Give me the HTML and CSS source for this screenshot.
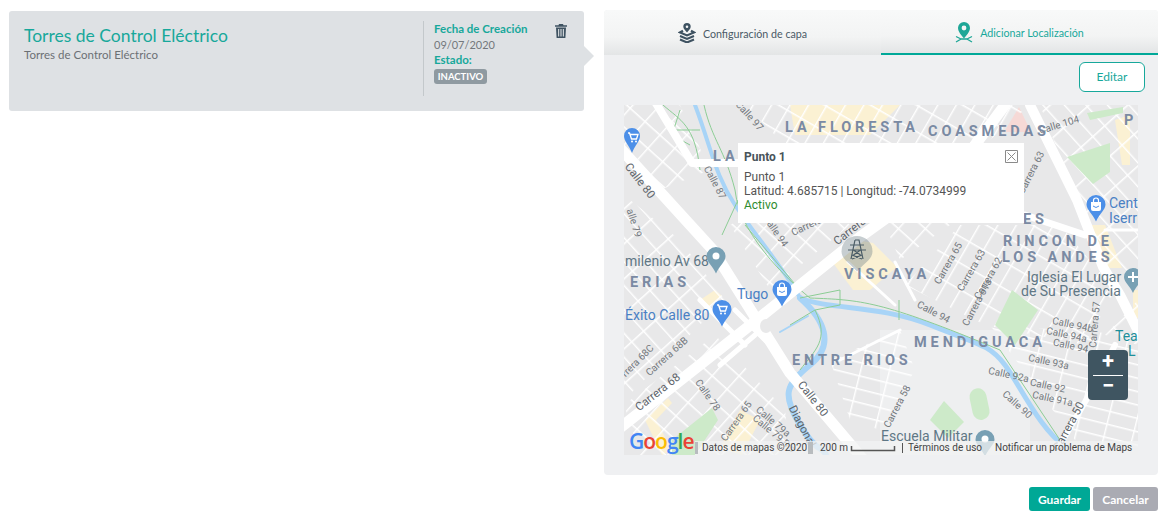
FILE: index.html
```html
<!DOCTYPE html>
<html lang="es">
<head>
    <meta charset="UTF-8">
    <meta name="viewport" content="width=device-width, initial-scale=1.0">
    <title>Torres de Control Eléctrico</title>
    <link rel="stylesheet" href="styles.css">
</head>
<body>

<div class="page">
    <div class="layer-card">
        <div class="layer-info">
            <div class="layer-title">Torres de Control Eléctrico</div>
            <div class="layer-desc">Torres de Control Eléctrico</div>
        </div>
        <div class="layer-meta">
            <div class="meta-label">Fecha de Creación</div>
            <div class="meta-value">09/07/2020</div>
            <div class="meta-label">Estado:</div>
            <span class="badge">INACTIVO</span>
        </div>
        <svg class="trash" viewBox="0 0 12 14" width="12" height="14">
            <path d="M4 0h4l.5 1.2H12v1.6H0V1.2h3.500z M1 3.600h10l-.6 10.400H1.600z M3.100 5v7.500h1.100V5z M5.450 5v7.500h1.100V5z M7.800 5v7.500h1.100V5z" fill="#3e5261" fill-rule="evenodd"/>
        </svg>
    </div>

    <div class="right-col">
        <div class="panel">
            <div class="tabs">
                <div class="tab">
                    <svg viewBox="0 0 18 20" width="18" height="20">
                        <path d="M9 0a3.700 3.700 0 0 1 3.700 3.700c0 2-2 3.600-3.700 5.800-1.700-2.200-3.700-3.800-3.700-5.800A3.700 3.700 0 0 1 9 0z M9 2.400a1.300 1.300 0 1 0 0 2.600 1.300 1.300 0 0 0 0-2.600z" fill="#3e5261" fill-rule="evenodd"/>
                        <path d="M5 7.800 2 9.500 9 12.400l7-2.900-3-1.700 M2 13 9 15.900 16 13 M2 16.500 9 19.400l7-2.900" fill="none" stroke="#3e5261" stroke-width="2.200"/>
                    </svg>
                    <span>Configuración de capa</span>
                </div>
                <div class="tab active">
                    <svg viewBox="0 0 18 21" width="18" height="21">
                        <path d="M9 0a6 6 0 0 1 6 6c0 3.500-3.500 7.500-6 10.500C6.500 13.500 3 9.500 3 6a6 6 0 0 1 6-6z M9 3.600a2.400 2.400 0 1 0 0 4.800 2.400 2.400 0 0 0 0-4.800z" fill="#1fa797" fill-rule="evenodd"/>
                        <path d="M1 14.500l5 2.500-5 3 M17 14.500l-5 2.500 5 3 M6 17h6" fill="none" stroke="#1fa797" stroke-width="1.300"/>
                    </svg>
                    <span>Adicionar Localización</span>
                </div>
            </div>

            <div class="panel-actions">
                <button class="btn-outline">Editar</button>
            </div>

            <div class="map">
                <svg class="map-canvas" viewBox="624 105 514 350" width="514" height="350">
                    <defs>
                        <pattern id="gridA" width="16" height="23" patternUnits="userSpaceOnUse" patternTransform="rotate(30)">
                            <path d="M0 0H16M0 0V23" stroke="#fff" stroke-width="2.800" fill="none"/>
                        </pattern>
                        <pattern id="gridB" width="28" height="13" patternUnits="userSpaceOnUse" patternTransform="rotate(14)">
                            <path d="M0 0H28M0 0V13" stroke="#fff" stroke-width="2.800" fill="none"/>
                        </pattern>
                        <pattern id="gridC" width="16" height="26" patternUnits="userSpaceOnUse" patternTransform="rotate(-42)">
                            <path d="M0 0H16M0 0V26" stroke="#fff" stroke-width="2.800" fill="none"/>
                        </pattern>
                        <pattern id="gridD" width="20" height="18" patternUnits="userSpaceOnUse" patternTransform="rotate(42)">
                            <path d="M0 0H20M0 0V18" stroke="#fff" stroke-width="2.800" fill="none"/>
                        </pattern>
                    </defs>

                    <rect x="624" y="105" width="514" height="350" fill="#e8e8e9"/>
                    <rect x="880" y="330" width="150" height="125" fill="#eeeff0"/>

                    <!-- parques y zonas -->
                    <polygon points="833,263 857,240 873,243 897,267 870,290 853,290" fill="#fbf1d3"/>
                    <polygon points="1004,132 1019,107 1031,132" fill="#f6d9d6"/>
                    <polygon points="1115,120 1130,115 1130,165 1122,165" fill="#fbf1d3"/>
                    <polygon points="1088,225 1105,225 1122,268 1105,268" fill="#fbf1d3"/>
                    <polygon points="645,420 668,398 672,403 656,420 672,450 662,455" fill="#fbf1d3"/>
                    <polygon points="720,448 740,410 760,420 742,455" fill="#fbf1d3"/>
                    <polygon points="790,105 900,105 870,135 795,135" fill="#fbf1d3"/>
                    <polygon points="700,300 715,290 722,296 705,310" fill="#fbf1d3"/>
                    <polygon points="1133,290 1138,290 1138,318 1133,318" fill="#fbf1d3"/>

                    <!-- manzanas -->
                    <polygon points="960,225 1060,225 1115,290 1085,345 985,325 905,285" fill="url(#gridA)"/>
                    <polygon points="990,325 1138,335 1138,450 1075,440" fill="url(#gridB)"/>
                    <polygon points="624,195 680,240 725,300 624,400" fill="url(#gridC)"/>
                    <polygon points="624,405 715,335 785,410 790,455 640,455" fill="url(#gridD)"/>
                    <polygon points="745,105 1030,105 990,140 925,190 790,150" fill="url(#gridA)"/>
                    <polygon points="1040,105 1138,105 1138,275 1105,275 1065,170" fill="url(#gridC)"/>
                    <polygon points="830,360 900,330 915,370 880,430 850,420" fill="url(#gridB)"/>
                    <polygon points="624,105 680,105 710,170 660,190 624,150" fill="url(#gridD)"/>
                    <polygon points="870,190 960,200 950,225 900,260" fill="url(#gridD)"/>
                    <polygon points="730,225 800,185 850,225 770,290" fill="url(#gridD)"/>
                    <polygon points="1105,335 1138,300 1138,345" fill="url(#gridC)"/>

                    <!-- parques encima de las calles -->
                    <polygon points="1067,157 1110,143 1110,172 1093,184" fill="#cdeac9"/>
                    <polygon points="1087,113 1123,107 1123,113 1090,120" fill="#cdeac9"/>
                    <polygon points="1012,290 1038,310 1015,345 995,325" fill="#cdeac9"/>
                    <polygon points="930,420 944,401 964,422 948,438" fill="#cdeac9"/>
                    <rect x="971" y="388" width="17" height="32" rx="8.500" transform="rotate(-12 980 404)" fill="#cdeac9"/>
                    <polygon points="672,440 712,408 718,420 695,455 672,455" fill="#cdeac9"/>

                    <!-- rio -->
                    <g fill="none" stroke="#a8d4f7" stroke-linecap="round">
                        <path d="M695 105C712 150 715 175 735 205S785 270 800 298" stroke-width="4"/>
                        <path d="M800 298C830 310 880 305 930 325S990 345 1005 365 1040 430 1066 447" stroke-width="5"/>
                        <path d="M800 298C825 320 835 345 810 365S782 395 800 425 822 445 826 455" stroke-width="6"/>
                        <path d="M780 332 808 316" stroke-width="2"/>
                    </g>

                    <!-- limites verdes -->
                    <g fill="none" stroke="#8ccd95" stroke-width="1">
                        <path d="M663 105C680 120 695 125 700 170 M704 105C712 140 725 150 735 190 740 240 800 290 810 298 860 300 880 300 1000 350L1060 440"/>
                        <path d="M670 130H700 M680 110 672 135 690 145 M738 200 722 235 M745 225 800 290"/>
                        <path d="M800 298 840 290V305L815 310 790 325 M815 310C830 340 815 350 800 370"/>
                        <path d="M899 300V320"/>
                    </g>

                    <!-- vias principales -->
                    <g fill="none" stroke="#fff" stroke-linecap="round" stroke-linejoin="round">
                        <path d="M620 148 713 250 790 373 862 458" stroke-width="11"/>
                        <path d="M620 428 753 323 860 237 960 165 1005 105" stroke-width="11"/>
                        <path d="M1030 105 1077 200 1103 267 1120 295 1140 335" stroke-width="10"/>
                        <path d="M657 105 692 163H745" stroke-width="8"/>
                        <path d="M1060 445 1092 390 1115 345" stroke-width="6"/>
                        <path d="M1025 215 1085 235" stroke-width="7"/>
                        <path d="M735 310 770 345M755 335 720 365M700 300 745 345" stroke-width="5"/>
                        <path d="M848 262 895 305 M895 262 915 300 M840 360 900 330 M1138 230H1105" stroke-width="3"/>
                    </g>
                    <ellipse cx="766" cy="326" rx="6" ry="7" fill="#e8e8e9"/>

                    <!-- calles -->
                    <g class="street">
                        <text transform="translate(747 118) rotate(48)">Calle 97</text>
                        <text transform="translate(1060 128) rotate(-17)">Calle 104</text>
                        <text transform="translate(712 184) rotate(62)">Calle 87</text>
                        <text transform="translate(631 224) rotate(72)">alle 79</text>
                        <text transform="translate(773 233) rotate(55)">Calle 94</text>
                        <text transform="translate(808 229) rotate(-25)">Carrera</text>
                        <text transform="translate(1034 174) rotate(-63)">Carrera 63</text>
                        <text transform="translate(951 265) rotate(-60)">Carrera 65</text>
                        <text transform="translate(974 272) rotate(-60)">Carrera 63</text>
                        <text transform="translate(991 280) rotate(-60)">Carrera 62</text>
                        <text transform="translate(980 304) rotate(-62)">Carrera 61a</text>
                        <text transform="translate(932 315) rotate(28)">Calle 94</text>
                        <text transform="translate(1072 328) rotate(12)">Calle 94b</text>
                        <text transform="translate(1066 338) rotate(12)">Calle 94a</text>
                        <text transform="translate(1070 349) rotate(12)">Calle 94</text>
                        <text transform="translate(1048 365) rotate(12)">Calle 93a</text>
                        <text transform="translate(1008 378) rotate(12)">Calle 92a</text>
                        <text transform="translate(1047 389) rotate(12)">Calle 92</text>
                        <text transform="translate(1052 402) rotate(12)">Calle 91a</text>
                        <text transform="translate(1015 407) rotate(42)">Calle 90</text>
                        <text transform="translate(1098 325) rotate(-85)">Carrera 57</text>
                        <text transform="translate(900 408) rotate(-62)">Carrera 58</text>
                        <text transform="translate(669 359) rotate(-42)">Carrera 68B</text>
                        <text transform="translate(640 363) rotate(-45)">rrera 68C</text>
                        <text transform="translate(705 397) rotate(55)">Calle 78</text>
                        <text transform="translate(739 423) rotate(-55)">Carrera 65</text>
                        <text transform="translate(771 424) rotate(40)">Calle 79a</text>
                        <text transform="translate(772 436) rotate(40)">Calle 79 Bis</text>
                    </g>
                    <g class="street-main">
                        <text transform="translate(637 183) rotate(52)">Calle 80</text>
                        <text transform="translate(660 395) rotate(-38)">Carrera 68</text>
                        <text transform="translate(810 401) rotate(52)">Calle 80</text>
                        <text transform="translate(799 428) rotate(62)">Diagonal</text>
                        <text transform="translate(852 234) rotate(-38)">Carrera</text>
                        <text transform="translate(1072 428) rotate(-62)">Carrera 50</text>
                    </g>

                    <!-- barrios -->
                    <g class="area">
                        <text x="785" y="132">LA FLORESTA</text>
                        <text x="928" y="136">COASMEDAS</text>
                        <text x="713" y="161">LA</text>
                        <text x="1023" y="224">ES</text>
                        <text x="1003" y="246">RINCON DE</text>
                        <text x="1002" y="262">LOS ANDES</text>
                        <text x="844" y="279">VISCAYA</text>
                        <text x="630" y="287">ERIAS</text>
                        <text x="792" y="365">ENTRE RIOS</text>
                        <text x="914" y="347">MENDIGUACA</text>
                        <text x="1124" y="125">P</text>
                    </g>

                    <!-- lugares -->
                    <g class="poi-blue">
                        <text x="1109" y="208">Cent</text>
                        <text x="1109" y="223">Iserr</text>
                        <text x="737" y="299">Tugo</text>
                        <text x="625" y="320">Éxito Calle 80</text>
                    </g>
                    <g class="poi-gray">
                        <text x="625" y="266">milenio Av 68</text>
                        <text x="1027" y="282">Iglesia El Lugar</text>
                        <text x="1021" y="296">de Su Presencia</text>
                        <text x="881" y="441">Escuela Militar</text>
                    </g>
                    <g class="poi-teal">
                        <text x="1115" y="341">Tea</text>
                        <text x="1128" y="356">L</text>
                    </g>

                    <!-- pines -->
                    <g fill="#4c8fe8">
                        <path d="M632 128a8 8 0 0 1 8 8c0 5-5 9-8 17-3-8-8-12-8-17a8 8 0 0 1 8-8z"/>
                        <path d="M1096 195a9.500 9.500 0 0 1 9.500 9.500c0 5-6 9-9.500 17-3.500-8-9.500-12-9.500-17a9.500 9.500 0 0 1 9.500-9.500z"/>
                        <path d="M782 280a9.500 9.500 0 0 1 9.500 9.500c0 5-6 9-9.500 17-3.500-8-9.500-12-9.500-17a9.500 9.500 0 0 1 9.500-9.500z"/>
                        <path d="M722 300a9.500 9.500 0 0 1 9.500 9.500c0 5-6 9-9.500 17-3.500-8-9.500-12-9.500-17a9.500 9.500 0 0 1 9.500-9.500z"/>
                    </g>
                    <g fill="none" stroke="#fff" stroke-width="1.300">
                        <path d="M628 133h1.500l2 6h5l1.500-4.500h-8"/>
                        <path d="M717 305h1.500l2 6h5l1.500-4.500h-8"/>
                    </g>
                    <g fill="#fff">
                        <circle cx="632" cy="141.500" r="1"/>
                        <circle cx="636" cy="141.500" r="1"/>
                        <circle cx="721" cy="313.500" r="1"/>
                        <circle cx="725" cy="313.500" r="1"/>
                        <path d="M1091 202h10v7a2 2 0 0 1-2 2h-6a2 2 0 0 1-2-2z"/>
                        <path d="M777 287h10v7a2 2 0 0 1-2 2h-6a2 2 0 0 1-2-2z"/>
                    </g>
                    <g fill="none" stroke="#fff" stroke-width="1.200">
                        <path d="M1093.500 202v-1.500a2.500 2.500 0 0 1 5 0v1.500"/>
                        <path d="M779.500 287v-1.500a2.500 2.500 0 0 1 5 0v1.500"/>
                    </g>
                    <path d="M1093 206q3 3 6 0M779 291q3 3 6 0" fill="none" stroke="#4c8fe8" stroke-width="1"/>
                    <g fill="#78a0b4">
                        <path d="M716 247a9.500 9.500 0 0 1 9.500 9.500c0 5-6 9-9.500 17-3.500-8-9.500-12-9.500-17a9.500 9.500 0 0 1 9.500-9.500z"/>
                        <path d="M985 430a9.500 9.500 0 0 1 9.500 9.500c0 5-6 9-9.500 17-3.500-8-9.500-12-9.500-17a9.500 9.500 0 0 1 9.500-9.500z"/>
                        <path d="M1133 268a9 9 0 0 1 9 9c0 5-6 9-9 16-3-7-9-11-9-16a9 9 0 0 1 9-9z"/>
                    </g>
                    <circle cx="716" cy="256" r="3.500" fill="#fff"/>
                    <circle cx="985" cy="439" r="3.500" fill="#fff"/>
                    <path d="M1133 272v10M1128 277h10" stroke="#fff" stroke-width="2"/>

                    <!-- marcador de torre -->
                    <path d="M857 236a15.500 15.500 0 0 1 15.500 15.500c0 8-9 12-15.500 20-6.500-8-15.500-12-15.500-20A15.500 15.500 0 0 1 857 236z" fill="#6d7f87" fill-opacity=".38"/>
                    <path d="M855 240h4l4 19M855 240l-4 19M850 245h14M848 250h18M853.500 250l7 5M860.500 250l-7 5M852 255l10 4M862 255l-10 4" fill="none" stroke="#4a5c66" stroke-width="1.200"/>

                    <!-- pie del mapa -->
                    <rect x="695" y="441" width="443" height="14" fill="#f2f3f3" fill-opacity=".75"/>
                    <rect x="695" y="442" width="3" height="12" fill="#b8bcbf"/>
                    <rect x="808" y="442" width="5" height="12" fill="#b8bcbf"/>
                    <text class="google" x="629" y="449"><tspan fill="#4285f4">G</tspan><tspan fill="#ea4335">o</tspan><tspan fill="#fbbc05">o</tspan><tspan fill="#4285f4">g</tspan><tspan fill="#34a853">l</tspan><tspan fill="#ea4335">e</tspan></text>
                    <g class="attrib">
                        <text x="702" y="451">Datos de mapas ©2020</text>
                        <text x="820" y="451">200 m</text>
                        <text x="908" y="451">Términos de uso</text>
                        <text x="995" y="451">Notificar un problema de Maps</text>
                    </g>
                    <path d="M902.500 443v10" stroke="#555" stroke-width="1"/>
                    <path d="M851.500 446v4.500H894.500V446" fill="none" stroke="#555" stroke-width="1.500"/>
                </svg>

                <div class="map-popup">
                    <div class="popup-title">Punto 1</div>
                    <div>Punto 1</div>
                    <div>Latitud: 4.685715 | Longitud: -74.0734999</div>
                    <div class="popup-status">Activo</div>
                    <svg class="popup-close" viewBox="0 0 13 13" width="13" height="13">
                        <path d="M.5.500h12v12H.5z M2.500 2.500l8 8M10.500 2.500l-8 8" fill="none" stroke="#8a8a8a"/>
                    </svg>
                </div>

                <div class="map-zoom">
                    <div class="zoom-btn">+</div>
                    <div class="zoom-line"></div>
                    <div class="zoom-btn">−</div>
                </div>
            </div>
        </div>

        <div class="form-actions">
            <button class="btn btn-save">Guardar</button>
            <button class="btn btn-cancel">Cancelar</button>
        </div>
    </div>
</div>

</body>
</html>
```

FILE: styles.css
```css
/* Estilos generales */
* {
    box-sizing: border-box;
    margin: 0;
    padding: 0;
}

body {
    font-family: "Lato", "Noto Sans", Arial, sans-serif;
    background-color: #ffffff;
    color: #666b70;
}

.page {
    display: flex;
    align-items: flex-start;
    gap: 20px;
    padding: 10px 14px 0 9px;
}

/* Tarjeta de capa */
.layer-card {
    position: relative;
    display: flex;
    flex: none;
    width: 575px;
    height: 100px;
    margin-top: 1px;
    padding: 10px 17px 15px 15px;
    background-color: #dee1e4;
    border-radius: 3px;
}

.layer-card::after {
    content: "";
    position: absolute;
    top: 35px;
    right: -10px;
    border-top: 10px solid transparent;
    border-bottom: 10px solid transparent;
    border-left: 10px solid #dee1e4;
}

.layer-info {
    flex: 1;
    padding-top: 3px;
}

.layer-title {
    font-size: 17.500px;
    line-height: 24px;
    color: #17a89b;
}

.layer-desc {
    font-size: 11.500px;
    line-height: 14px;
    color: #6c7074;
}

.layer-meta {
    width: 132px;
    height: 75px;
    padding-left: 10px;
    border-left: 1px solid #c3c8cb;
    font-size: 11.500px;
    line-height: 15px;
}

.meta-label {
    font-weight: 700;
    color: #17a89b;
}

.meta-value {
    margin-top: 1px;
    color: #74787c;
    font-size: 11px;
}

.badge {
    display: block;
    width: 53px;
    margin-top: 2px;
    background-color: #8f9aa1;
    border-radius: 3px;
    color: #ffffff;
    font-size: 9.500px;
    font-weight: 700;
    line-height: 15px;
    text-align: center;
}

.trash {
    flex: none;
    margin-top: 3px;
}

/* Columna derecha */
.right-col {
    flex: none;
    width: 554px;
}

.panel {
    height: 465px;
    background-color: #eff0f2;
    border-radius: 4px;
    overflow: hidden;
}

.tabs {
    display: flex;
    height: 45px;
}

.tab {
    display: flex;
    align-items: center;
    justify-content: center;
    gap: 7px;
    width: 50%;
    padding-top: 1px;
    background: linear-gradient(#f8f9f9, #f3f4f4 60%, #e3e5e6);
    color: #4a5a66;
    font-size: 10.700px;
}

.tab.active {
    color: #17a89b;
    border-bottom: 2px solid #00a898;
}

.panel-actions {
    display: flex;
    justify-content: flex-end;
    height: 50px;
    padding: 7px 13px 0 0;
}

.btn-outline {
    width: 66px;
    height: 30px;
    padding-bottom: 2px;
    background-color: #ffffff;
    border: 1px solid #17a89b;
    border-radius: 6px;
    color: #17a89b;
    font-family: inherit;
    font-size: 12px;
}

/* Mapa */
.map {
    position: relative;
    width: 514px;
    height: 350px;
    margin-left: 20px;
    overflow: hidden;
}

.map-canvas {
    display: block;
    font-family: "Roboto", Arial, sans-serif;
}

.street text {
    fill: #74797e;
    font-size: 10px;
    text-anchor: middle;
}

.street-main text {
    fill: #5e656b;
    font-size: 11.500px;
    text-anchor: middle;
}

.area text {
    fill: #7a8aa3;
    font-size: 14.500px;
    font-weight: 700;
    letter-spacing: 3.900px;
}

.poi-blue text {
    fill: #4a80c4;
    font-size: 14px;
}

.poi-gray text {
    fill: #5f7785;
    font-size: 14px;
}

.poi-teal text {
    fill: #1d8f9a;
    font-size: 14px;
}

.google {
    font-family: "Open Sans", Arial, sans-serif;
    font-size: 21px;
    font-weight: 600;
    letter-spacing: -1px;
}

.attrib text {
    fill: #444444;
    font-size: 10px;
}

.map-popup {
    position: absolute;
    top: 38px;
    left: 114px;
    width: 286px;
    height: 80px;
    padding: 7px 6px;
    background-color: #ffffff;
    color: #555555;
    font-family: "Roboto", Arial, sans-serif;
    font-size: 12px;
    line-height: 14px;
}

.popup-title {
    margin-bottom: 6px;
    color: #48535a;
    font-weight: 700;
}

.popup-status {
    color: #2e8b2e;
}

.popup-close {
    position: absolute;
    top: 7px;
    right: 6px;
}

.map-zoom {
    position: absolute;
    top: 245px;
    right: 10px;
    width: 40px;
    height: 50px;
    background-color: #3f5561;
    border-radius: 4px;
    color: #ffffff;
    font-family: "Roboto", Arial, sans-serif;
    font-size: 22px;
    font-weight: 700;
    text-align: center;
}

.zoom-btn {
    height: 25px;
    line-height: 22px;
}

.zoom-line {
    position: absolute;
    top: 25px;
    left: 5px;
    width: 30px;
    border-top: 1px solid #ffffff;
}

/* Botones de formulario */
.form-actions {
    display: flex;
    justify-content: flex-end;
    gap: 3px;
    margin-top: 12px;
}

.btn {
    height: 24px;
    border: none;
    border-radius: 3px;
    color: #ffffff;
    font-family: inherit;
    font-size: 12px;
    font-weight: 700;
}

.btn-save {
    width: 61px;
    background-color: #00a896;
}

.btn-cancel {
    width: 65px;
    background-color: #aaabb3;
}
```
